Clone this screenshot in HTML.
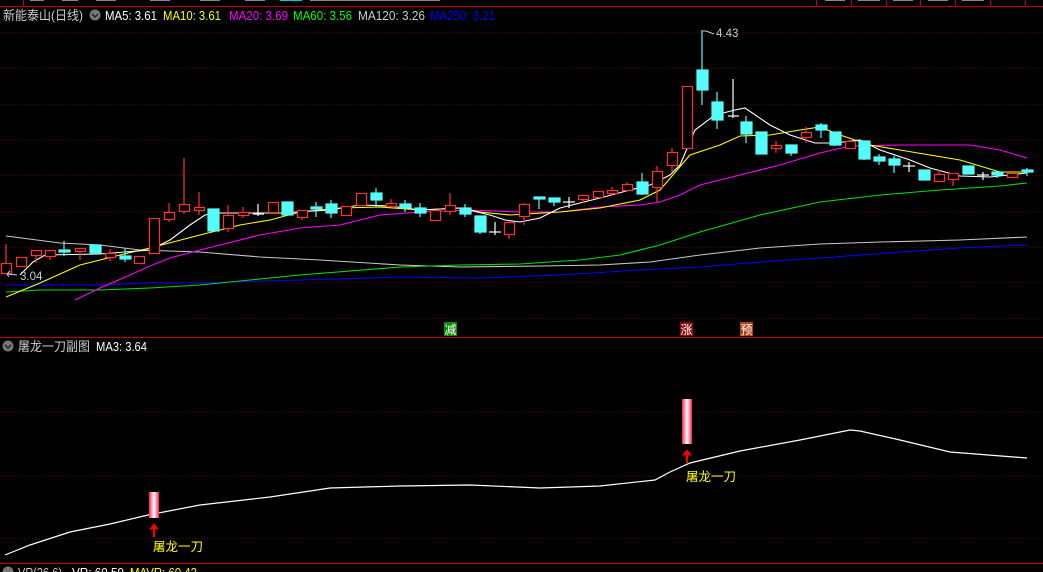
<!DOCTYPE html>
<html><head><meta charset="utf-8"><style>
html,body{margin:0;padding:0;background:#000;width:1043px;height:572px;overflow:hidden}
svg{display:block}
text{font-family:"Liberation Sans","Noto Sans CJK SC",sans-serif}
</style></head><body>
<svg width="1043" height="572" viewBox="0 0 1043 572" xmlns="http://www.w3.org/2000/svg">
<rect width="1043" height="572" fill="#000"/>
<g fill="none" stroke="#c00000" stroke-width="1">
<line x1="0" y1="6.5" x2="1043" y2="6.5"/>
<line x1="23.5" y1="0" x2="23.5" y2="6"/>
<line x1="816.5" y1="0" x2="816.5" y2="6"/><line x1="851.5" y1="0" x2="851.5" y2="6"/><line x1="886.5" y1="0" x2="886.5" y2="6"/><line x1="920.5" y1="0" x2="920.5" y2="6"/><line x1="955.5" y1="0" x2="955.5" y2="6"/><line x1="990.5" y1="0" x2="990.5" y2="6"/><line x1="1025.5" y1="0" x2="1025.5" y2="6"/>
</g>
<g fill="#888"><rect x="30" y="0" width="14" height="1"/><rect x="62" y="0" width="16" height="1"/><rect x="96" y="0" width="20" height="1"/><rect x="150" y="0" width="20" height="1"/><rect x="200" y="0" width="20" height="1"/><rect x="245" y="0" width="20" height="1"/><rect x="310" y="0" width="130" height="1"/><rect x="825" y="0" width="20" height="1"/><rect x="858" y="0" width="22" height="1"/><rect x="893" y="0" width="20" height="1"/><rect x="928" y="0" width="20" height="1"/><rect x="962" y="0" width="22" height="1"/></g>
<rect x="280" y="0" width="22" height="1" fill="#0cc"/>
<g stroke="#5a0000" stroke-width="1" stroke-dasharray="1,2">
<line x1="0" y1="32.5" x2="1043" y2="32.5"/><line x1="0" y1="68.5" x2="1043" y2="68.5"/><line x1="0" y1="104.5" x2="1043" y2="104.5"/><line x1="0" y1="140.5" x2="1043" y2="140.5"/><line x1="0" y1="175.5" x2="1043" y2="175.5"/><line x1="0" y1="211.5" x2="1043" y2="211.5"/><line x1="0" y1="247.5" x2="1043" y2="247.5"/><line x1="0" y1="282.5" x2="1043" y2="282.5"/><line x1="0" y1="318.5" x2="1043" y2="318.5"/>
<line x1="0" y1="412.5" x2="1043" y2="412.5"/><line x1="0" y1="476.5" x2="1043" y2="476.5"/><line x1="0" y1="538.5" x2="1043" y2="538.5"/>
</g>
<line x1="0" y1="337.5" x2="1043" y2="337.5" stroke="#c00000"/>
<line x1="0" y1="563.5" x2="1043" y2="563.5" stroke="#d00000"/>
<!-- header -->
<g font-size="13" lengthAdjust="spacingAndGlyphs">
<text x="3" y="20" fill="#ccc" textLength="80" lengthAdjust="spacingAndGlyphs">新能泰山(日线)</text>
<text x="105" y="20" fill="#fff" textLength="52" lengthAdjust="spacingAndGlyphs">MA5: 3.61</text>
<text x="163" y="20" fill="#ff0" textLength="58" lengthAdjust="spacingAndGlyphs">MA10: 3.61</text>
<text x="229" y="20" fill="#f0f" textLength="59" lengthAdjust="spacingAndGlyphs">MA20: 3.69</text>
<text x="293" y="20" fill="#0f0" textLength="59" lengthAdjust="spacingAndGlyphs">MA60: 3.56</text>
<text x="358" y="20" fill="#ccc" textLength="67" lengthAdjust="spacingAndGlyphs">MA120: 3.26</text>
<text x="430" y="20" fill="#00f" textLength="65" lengthAdjust="spacingAndGlyphs">MA250: 3.21</text>
</g>
<circle cx="95" cy="15" r="5.5" fill="#777"/><path d="M92 14l3 3 3-3" stroke="#222" fill="none" stroke-width="1.5"/>
<g fill="none" stroke-width="1.1">
<polyline stroke="#c8c8c8" points="6,236 60,243 100,245 140,250 200,252 260,257 320,260 400,265 460,267 540,266 600,265 650,262 700,255 760,248 820,244 880,242 960,240 1027,237"/>
<polyline stroke="#0000ff" points="6,285 100,285 150,283 200,283 300,280 400,277 480,278 560,275 640,270 700,267 760,262 820,258 900,252 960,248 1027,245"/>
<polyline stroke="#00e000" points="6,292 40,290 100,290 150,288 200,285 300,275 400,267 460,265 520,264 580,260 620,255 660,245 700,232 760,215 820,202 880,195 940,190 1000,186 1027,183"/>
<polyline stroke="#f0f" points="75,300 100,288 130,275 150,266 170,258 200,250 220,245 260,235 300,228 340,225 380,215 420,212 470,210 520,212 560,212 600,207 640,205 660,202 680,195 700,185 740,175 780,165 820,153 850,146 900,145 940,145 970,145 1000,150 1027,158"/>
<polyline stroke="#ff0" points="6,297 40,283 80,265 120,255 150,248 200,235 240,225 270,220 300,212 340,208 380,207 420,210 460,208 480,212 510,215 560,212 600,208 640,200 660,190 690,155 720,145 740,136 770,135 800,130 820,127 840,135 870,145 900,150 930,155 960,160 1000,172 1027,172"/>
<polyline stroke="#fff" points="20,275 33,262 45,255 100,254 150,250 170,240 190,225 205,215 215,213 280,213 330,210 360,205 390,206 420,210 460,208 490,215 505,220 520,222 540,218 560,208 600,198 630,190 650,185 670,175 680,165 695,130 715,115 735,110 745,108 770,125 790,135 815,143 835,143 860,140 880,150 910,160 930,168 960,176 990,177 1027,173"/>
</g>
<g stroke-width="1.2">
<g stroke="#ff3030" fill="#000">
<line x1="6" y1="244" x2="6" y2="263"/><rect x="1.5" y="263.5" width="10" height="10"/>
<rect x="16.5" y="257.5" width="10" height="9"/>
<line x1="36" y1="255" x2="36" y2="263"/><rect x="31.5" y="250.5" width="10" height="5"/>
<line x1="50" y1="256" x2="50" y2="260"/><rect x="45.5" y="250.5" width="10" height="6"/>
<line x1="80" y1="251" x2="80" y2="260"/><rect x="75.5" y="248.5" width="10" height="3"/>
<line x1="110" y1="249" x2="110" y2="261"/><rect x="105.5" y="253.5" width="10" height="4"/>
<rect x="134.5" y="256.5" width="10" height="7"/>
<rect x="149.5" y="218.5" width="10" height="35"/>
<line x1="169" y1="203" x2="169" y2="222"/><rect x="164.5" y="212.5" width="10" height="7"/>
<line x1="184" y1="158" x2="184" y2="214"/><rect x="179.5" y="204.5" width="10" height="7"/>
<line x1="199" y1="192" x2="199" y2="215"/><rect x="194.5" y="207.5" width="10" height="3"/>
<line x1="228" y1="205" x2="228" y2="232"/><rect x="223.5" y="215.5" width="10" height="13"/>
<line x1="243" y1="207" x2="243" y2="218"/><rect x="238.5" y="212.5" width="10" height="3"/>
<rect x="268.5" y="202.5" width="10" height="10"/>
<line x1="302" y1="217" x2="302" y2="220"/><rect x="297.5" y="210.5" width="10" height="7"/>
<rect x="341.5" y="206.5" width="10" height="9"/>
<rect x="356.5" y="193.5" width="10" height="12"/>
<line x1="391" y1="199" x2="391" y2="206"/><rect x="386.5" y="203.5" width="10" height="3"/>
<rect x="430.5" y="210.5" width="10" height="10"/>
<line x1="450" y1="193" x2="450" y2="215"/><rect x="445.5" y="205.5" width="10" height="6"/>
<line x1="509" y1="234" x2="509" y2="239"/><rect x="504.5" y="222.5" width="10" height="12"/>
<line x1="524" y1="203" x2="524" y2="225"/><rect x="519.5" y="204.5" width="10" height="12"/>
<line x1="583" y1="199" x2="583" y2="203"/><rect x="578.5" y="195.5" width="10" height="4"/>
<rect x="593.5" y="191.5" width="10" height="6"/>
<line x1="612" y1="187" x2="612" y2="195"/><rect x="607.5" y="190.5" width="10" height="3"/>
<line x1="627" y1="182" x2="627" y2="184"/><rect x="622.5" y="184.5" width="10" height="6"/>
<line x1="657" y1="166" x2="657" y2="202"/><rect x="652.5" y="171.5" width="10" height="16"/>
<line x1="672" y1="148" x2="672" y2="172"/><rect x="667.5" y="152.5" width="10" height="13"/>
<rect x="682.5" y="86.5" width="10" height="62"/>
<line x1="776" y1="141" x2="776" y2="153"/><rect x="771.5" y="145.5" width="10" height="3"/>
<line x1="806" y1="127" x2="806" y2="143"/><rect x="801.5" y="132.5" width="10" height="5"/>
<rect x="845.5" y="141.5" width="10" height="7"/>
<line x1="939" y1="170" x2="939" y2="174"/><rect x="934.5" y="174.5" width="10" height="7"/>
<line x1="953" y1="179" x2="953" y2="186"/><rect x="948.5" y="173.5" width="10" height="6"/>
<rect x="1007.5" y="173.5" width="10" height="4"/>
</g>
<g stroke="#54fcfc" fill="#54fcfc">
<line x1="64" y1="241" x2="64" y2="256"/><rect x="59" y="250" width="11" height="2"/>
<rect x="90" y="245" width="11" height="8"/>
<line x1="125" y1="248" x2="125" y2="262"/><rect x="120" y="256" width="11" height="3"/>
<rect x="208" y="209" width="11" height="22"/>
<rect x="282" y="202" width="11" height="13"/>
<line x1="316" y1="202" x2="316" y2="217"/><rect x="311" y="207" width="11" height="2"/>
<line x1="331" y1="200" x2="331" y2="218"/><rect x="326" y="204" width="11" height="9"/>
<line x1="376" y1="188" x2="376" y2="207"/><rect x="371" y="193" width="11" height="7"/>
<line x1="405" y1="200" x2="405" y2="212"/><rect x="400" y="204" width="11" height="4"/>
<line x1="420" y1="203" x2="420" y2="217"/><rect x="415" y="208" width="11" height="5"/>
<line x1="465" y1="204" x2="465" y2="217"/><rect x="460" y="208" width="11" height="6"/>
<line x1="480" y1="216" x2="480" y2="234"/><rect x="475" y="216" width="11" height="16"/>
<line x1="539" y1="197" x2="539" y2="209"/><rect x="534" y="197" width="11" height="2"/>
<line x1="554" y1="198" x2="554" y2="206"/><rect x="549" y="198" width="11" height="4"/>
<line x1="642" y1="173" x2="642" y2="195"/><rect x="637" y="182" width="11" height="12"/>
<line x1="702" y1="30" x2="702" y2="105"/><rect x="697" y="70" width="11" height="20"/>
<line x1="717" y1="92" x2="717" y2="129"/><rect x="712" y="102" width="11" height="18"/>
<line x1="746" y1="116" x2="746" y2="143"/><rect x="741" y="122" width="11" height="12"/>
<rect x="756" y="132" width="11" height="22"/>
<line x1="791" y1="145" x2="791" y2="156"/><rect x="786" y="145" width="11" height="8"/>
<line x1="821" y1="123" x2="821" y2="138"/><rect x="816" y="125" width="11" height="5"/>
<line x1="835" y1="132" x2="835" y2="146"/><rect x="830" y="132" width="11" height="13"/>
<line x1="864" y1="141" x2="864" y2="160"/><rect x="859" y="141" width="11" height="18"/>
<line x1="879" y1="154" x2="879" y2="165"/><rect x="874" y="157" width="11" height="4"/>
<line x1="894" y1="156" x2="894" y2="173"/><rect x="889" y="159" width="11" height="6"/>
<rect x="919" y="170" width="11" height="10"/>
<rect x="963" y="166" width="11" height="8"/>
<line x1="997" y1="172" x2="997" y2="178"/><rect x="992" y="172" width="11" height="3"/>
<line x1="1027" y1="168" x2="1027" y2="176"/><rect x="1022" y="170" width="11" height="2"/>
</g>
<g stroke="#fff">
<line x1="258" y1="204" x2="258" y2="216"/><line x1="253" y1="214" x2="264" y2="214"/>
<line x1="495" y1="222" x2="495" y2="235"/><line x1="489" y1="232" x2="501" y2="232"/>
<line x1="569" y1="197" x2="569" y2="208"/><line x1="563" y1="202" x2="575" y2="202"/>
<line x1="733" y1="79" x2="733" y2="118"/><line x1="728" y1="116" x2="739" y2="116"/>
<line x1="909" y1="162" x2="909" y2="172"/><line x1="903" y1="166" x2="915" y2="166"/>
<line x1="983" y1="172" x2="983" y2="180"/><line x1="977" y1="175" x2="989" y2="175"/>
</g>
</g>
<g fill="#ccc" font-size="11.5">
<text x="716" y="37">4.43</text><path d="M703 31h3M706 31l8 3" stroke="#ccc" fill="none"/>
<text x="20" y="280">3.04</text><path d="M7 274l10 1M7 274l3 -3M7 274l2 3" stroke="#ccc" fill="none"/>
</g>
<rect x="444" y="322" width="13" height="14" fill="#0a8a0a"/><text x="444.5" y="334" font-size="12" fill="#fff">减</text>
<rect x="680" y="322" width="13" height="14" fill="#8a0a0a"/><text x="680.5" y="334" font-size="12" fill="#fff">涨</text>
<rect x="740" y="322" width="13" height="14" fill="#b04010"/><text x="740.5" y="334" font-size="12" fill="#fff">预</text>
<circle cx="8" cy="346" r="5.5" fill="#777"/><path d="M5 345l3 3 3-3" stroke="#222" fill="none" stroke-width="1.5"/>
<text x="18" y="351" font-size="13" fill="#ccc" textLength="72" lengthAdjust="spacingAndGlyphs">屠龙一刀副图</text>
<text x="96" y="351" font-size="13" fill="#fff" textLength="51" lengthAdjust="spacingAndGlyphs">MA3: 3.64</text>
<polyline fill="none" stroke="#fff" stroke-width="1.2" points="5,555 30,545 70,532 110,524 148,515 200,505 270,497 330,488 400,486 470,485 540,488 600,486 655,480 670,472 690,463 740,451 800,440 850,430 860,431 900,440 950,452 1027,458"/>
<defs><linearGradient id="bar" x1="0" x2="1" y1="0" y2="0"><stop offset="0" stop-color="#ff2050"/><stop offset="0.5" stop-color="#fff"/><stop offset="1" stop-color="#ff2050"/></linearGradient></defs>
<rect x="149" y="492" width="10" height="26" fill="url(#bar)"/>
<rect x="682" y="399" width="10" height="45" fill="url(#bar)"/>
<g fill="#f00" stroke="#f00"><path d="M150 529l4-5 4 5z"/><line x1="154" y1="528" x2="154" y2="537" stroke-width="2"/>
<path d="M683 455l4-5 4 5z"/><line x1="687" y1="454" x2="687" y2="463" stroke-width="2"/></g>
<text x="153" y="551" font-size="12.5" fill="#ff0">屠龙一刀</text>
<text x="686" y="481" font-size="12.5" fill="#ff0">屠龙一刀</text>
<circle cx="8" cy="572" r="5.5" fill="#777"/>
<text x="18" y="577" font-size="13" fill="#ccc" textLength="44" lengthAdjust="spacingAndGlyphs">VR(26,6)</text>
<text x="72" y="577" font-size="13" fill="#fff" textLength="52" lengthAdjust="spacingAndGlyphs">VR: 60.59</text>
<text x="130" y="577" font-size="13" fill="#ff0" textLength="67" lengthAdjust="spacingAndGlyphs">MAVR: 60.42</text>
</svg>
</body></html>
